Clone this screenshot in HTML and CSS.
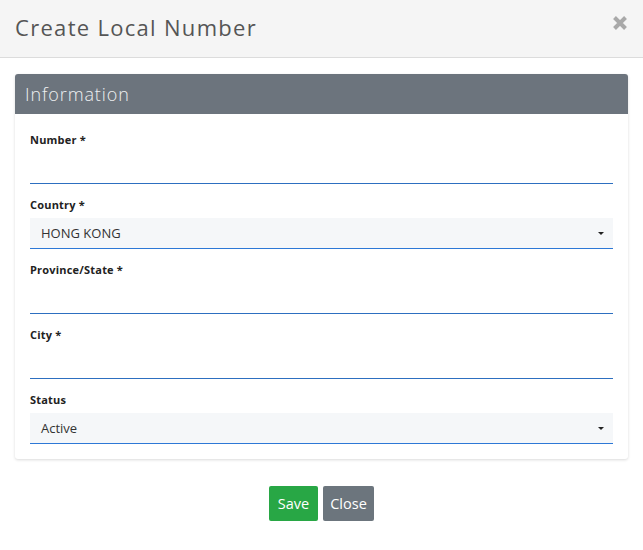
FILE: index.html
```html
<!DOCTYPE html>
<html>
<head>
<meta charset="utf-8">
<link rel="stylesheet" href="styles.css">
</head>
<body>
<div class="modal">
  <div class="modal-header">
    <h4 class="modal-title">Create Local Number</h4>
    <button class="close-x" aria-label="Close">
      <svg width="16" height="16" viewBox="0 0 16 16"><path d="M2.5 2.5 L13.5 13.5 M13.5 2.5 L2.5 13.5" stroke="#a9a9a9" stroke-width="4" stroke-linecap="butt"/></svg>
    </button>
  </div>
  <div class="modal-body">
    <div class="card">
      <div class="card-header">Information</div>
      <div class="card-body">
        <div class="group">
          <label class="lbl">Number *</label>
          <div class="input"></div>
        </div>
        <div class="group">
          <label class="lbl">Country *</label>
          <div class="select"><span>HONG KONG</span><span class="caret"></span></div>
        </div>
        <div class="group">
          <label class="lbl">Province/State *</label>
          <div class="input"></div>
        </div>
        <div class="group">
          <label class="lbl">City *</label>
          <div class="input"></div>
        </div>
        <div class="group last">
          <label class="lbl">Status</label>
          <div class="select"><span>Active</span><span class="caret"></span></div>
        </div>
      </div>
    </div>
  </div>
  <div class="modal-footer">
    <button class="btn btn-save">Save</button>
    <button class="btn btn-close">Close</button>
  </div>
</div>
</body>
</html>
```
FILE: styles.css
```css
html, body { margin: 0; padding: 0; background: #fff; }
body { font-family: "Open Sans", "Liberation Sans", sans-serif; color: #333; }
.modal { width: 643px; }
.modal-header {
  height: 57px;
  background: #f5f5f5;
  border-bottom: 1px solid #dcdcdc;
  display: flex;
  align-items: center;
  justify-content: space-between;
  padding: 0 15px;
}
.modal-title {
  margin: -3px 0 0 0;
  font-family: "Open Sans", sans-serif;
  font-weight: 400;
  font-size: 22px;
  color: #555;
  letter-spacing: 1.3px;
}
.close-x {
  border: none; background: none; padding: 0; margin-top: -11px;
  display: flex;
}
.modal-body { padding: 16px 15px 0 15px; }
.card {
  background: #fff;
  border-radius: 3px;
  box-shadow: 0 1px 3px rgba(0,0,0,0.15);
}
.card-header {
  height: 40px;
  background: #6c747d;
  color: #eef0f2;
  font-size: 18px;
  font-weight: 300;
  display: flex;
  align-items: center;
  padding: 0 10px;
  border-radius: 3px 3px 0 0;
  letter-spacing: 0.9px;
}
.card-body { padding: 19px 15px 15px 15px; }
.group { margin-bottom: 14px; }
.group.last { margin-bottom: 0; }
.lbl {
  display: block;
  font-size: 11px;
  font-weight: 700;
  color: #222;
  line-height: 14px;
  margin-bottom: 6px;
  letter-spacing: 0.2px;
}
.input {
  height: 30px;
  border-bottom: 1px solid #2d6fc0;
}
.select {
  height: 30px;
  background: #f5f7f9;
  border-bottom: 1px solid #2d78d6;
  display: flex;
  align-items: center;
  justify-content: space-between;
  padding: 0 11px;
  font-size: 13px;
  color: #333;
}
.caret {
  width: 0; height: 0;
  border-left: 3px solid transparent;
  border-right: 3px solid transparent;
  border-top: 3px solid #222;
  margin-right: -2px;
}
.modal-footer {
  display: flex;
  justify-content: center;
  gap: 5px;
  padding-top: 27px;
}
.btn {
  border: none;
  border-radius: 2px;
  height: 35px;
  color: #fff;
  font-family: "Open Sans", sans-serif;
  font-size: 14.5px;
  padding: 0 6px;
}
.btn-save { background: #28a745; width: 49px; }
.btn-close { background: #6c757d; width: 51px; }
```
